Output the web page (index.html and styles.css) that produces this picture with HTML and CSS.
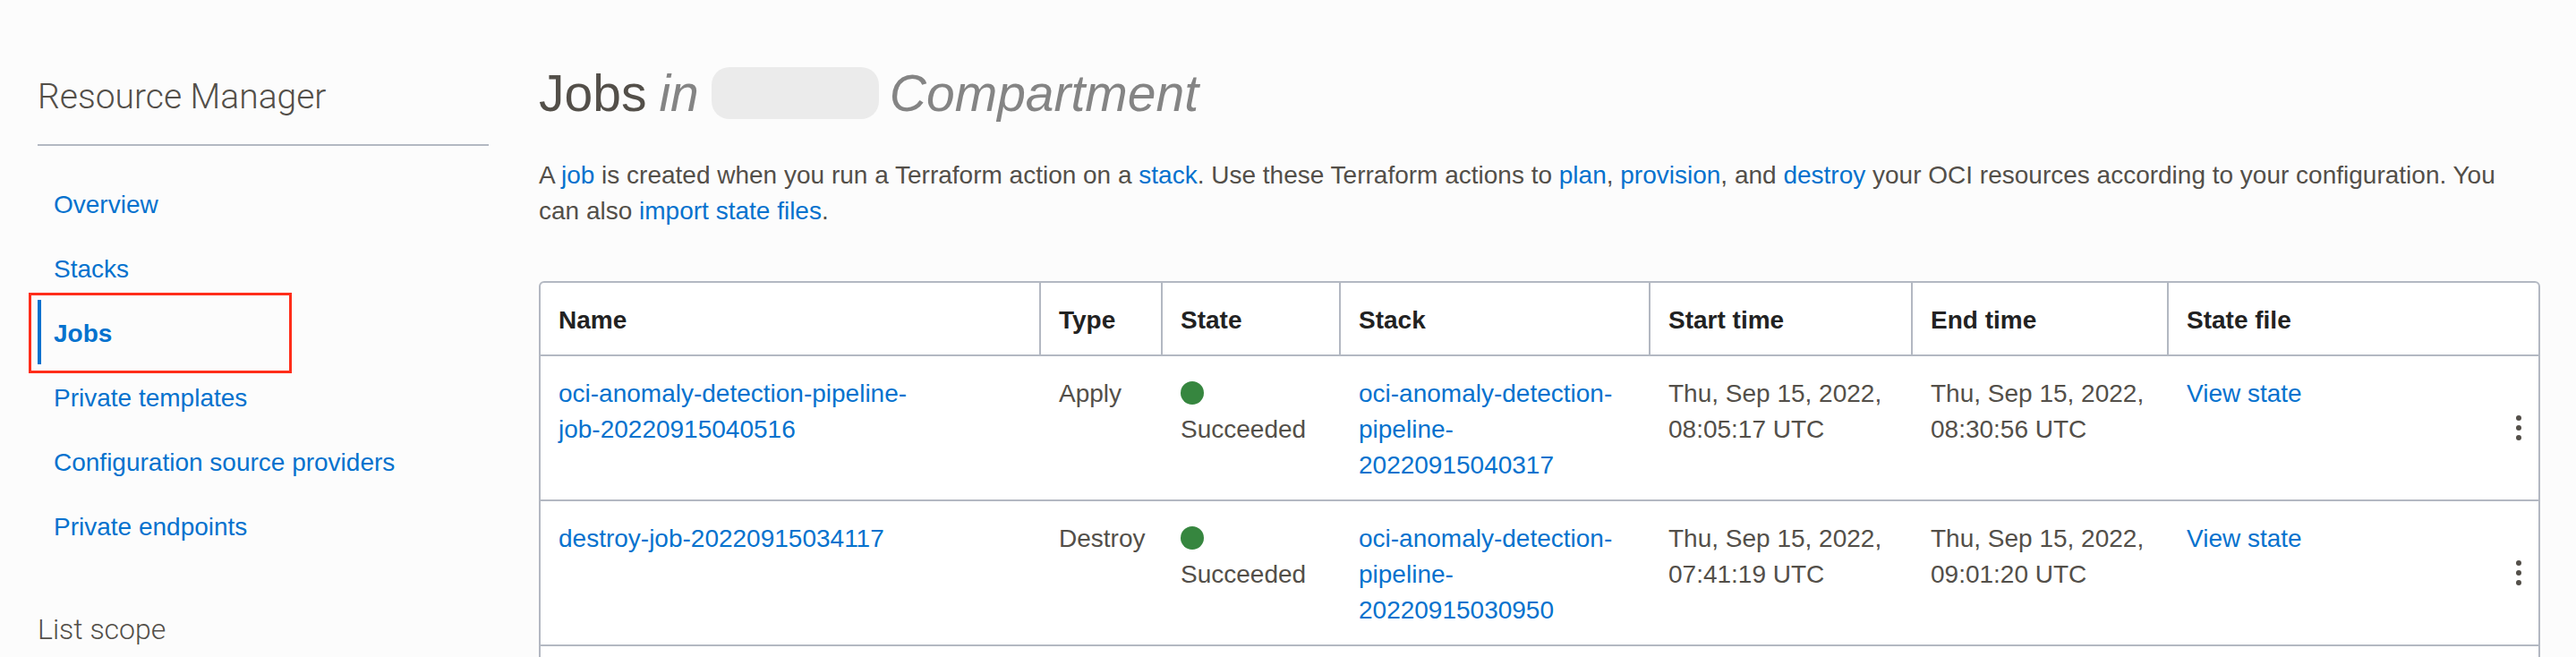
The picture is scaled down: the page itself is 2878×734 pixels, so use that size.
FILE: index.html
```html
<!DOCTYPE html>
<html lang="en">
<head>
<meta charset="utf-8">
<title>Jobs - Resource Manager</title>
<link rel="stylesheet" href="styles.css">
</head>
<body>
<div class="shell">
  <aside class="sidebar">
    <h2 class="sidebar-title">Resource Manager</h2>
    <nav class="nav" aria-label="Resource Manager">
      <a class="nav-item" href="#">Overview</a>
      <a class="nav-item" href="#">Stacks</a>
      <a class="nav-item active" href="#" aria-current="page">Jobs<span class="highlight"></span></a>
      <a class="nav-item" href="#">Private templates</a>
      <a class="nav-item" href="#">Configuration source providers</a>
      <a class="nav-item" href="#">Private endpoints</a>
    </nav>
    <h3 class="scope-title">List scope</h3>
  </aside>
  <main class="main">
    <h1 class="title"><span>Jobs</span><em>in</em><span class="redacted"></span><em>Compartment</em></h1>
    <p class="intro">A <a href="#">job</a> is created when you run a Terraform action on a <a href="#">stack</a>. Use these Terraform actions to <a href="#">plan</a>, <a href="#">provision</a>, and <a href="#">destroy</a> your OCI resources according to your configuration. You can also <a href="#">import state files</a>.</p>
    <div class="table-frame">
      <table class="jobs">
        <colgroup>
          <col class="col-name"><col class="col-type"><col class="col-state"><col class="col-stack"><col class="col-start"><col class="col-end"><col><col class="col-menu">
        </colgroup>
        <thead>
          <tr><th>Name</th><th>Type</th><th>State</th><th>Stack</th><th>Start time</th><th>End time</th><th colspan="2">State file</th></tr>
        </thead>
        <tbody>
          <tr>
            <td><a href="#">oci-anomaly-detection-pipeline-<br>job-20220915040516</a></td>
            <td>Apply</td>
            <td><span class="dot"></span>Succeeded</td>
            <td><a href="#">oci-anomaly-detection-<br>pipeline-<br>20220915040317</a></td>
            <td>Thu, Sep 15, 2022,<br>08:05:17 UTC</td>
            <td>Thu, Sep 15, 2022,<br>08:30:56 UTC</td>
            <td><a href="#">View state</a></td>
            <td class="menu-cell"><button class="menu" type="button" aria-label="Actions"><svg width="6" height="28" viewBox="0 0 6 28"><circle cx="3" cy="3" r="3"/><circle cx="3" cy="14" r="3"/><circle cx="3" cy="25" r="3"/></svg></button></td>
          </tr>
          <tr>
            <td><a href="#">destroy-job-20220915034117</a></td>
            <td>Destroy</td>
            <td><span class="dot"></span>Succeeded</td>
            <td><a href="#">oci-anomaly-detection-<br>pipeline-<br>20220915030950</a></td>
            <td>Thu, Sep 15, 2022,<br>07:41:19 UTC</td>
            <td>Thu, Sep 15, 2022,<br>09:01:20 UTC</td>
            <td><a href="#">View state</a></td>
            <td class="menu-cell"><button class="menu" type="button" aria-label="Actions"><svg width="6" height="28" viewBox="0 0 6 28"><circle cx="3" cy="3" r="3"/><circle cx="3" cy="14" r="3"/><circle cx="3" cy="25" r="3"/></svg></button></td>
          </tr>
          <tr><td colspan="8"></td></tr>
        </tbody>
      </table>
    </div>
  </main>
</div>
</body>
</html>
```
FILE: styles.css
```css
* { box-sizing: border-box; }

body {
  margin: 0;
  background: #fcfcfc;
  color: #534f49;
  font: 28px/40px "Liberation Sans", Arial, sans-serif;
}

a { color: #0572ce; text-decoration: none; }

.shell {
  display: flex;
  gap: 56px;
  height: 100vh;
  padding: 0 40px 0 42px;
  overflow: hidden;
}

/* Sidebar */
.sidebar { flex: 0 0 504px; padding-top: 80px; }

.sidebar-title {
  margin: 0 0 28px;
  padding-bottom: 25px;
  border-bottom: 2px solid #b3b8c2;
  font: 300 39px/56px Roboto, sans-serif;
}

.nav { display: flex; flex-direction: column; }

.nav-item {
  position: relative;
  padding: 18px 0 14px 14px;
  border-left: 4px solid transparent;
}

.nav-item.active { border-left-color: #0572ce; font-weight: bold; }

.highlight {
  position: absolute;
  top: -8px;
  left: -14px;
  width: 294px;
  height: 90px;
  border: 3px solid #ff2d1a;
}

.scope-title {
  margin: 58px 0 0;
  font: 300 32px/44px Roboto, sans-serif;
}

/* Main */
.main { flex: 1; min-width: 0; padding-top: 72px; }

.title {
  display: flex;
  align-items: center;
  gap: 14px;
  margin: 0 0 40px;
  font-size: 57px;
  font-weight: normal;
  line-height: 64px;
}

.title em { color: #848484; }

.redacted {
  width: 187px;
  height: 58px;
  margin-right: -2px;
  border-radius: 20px;
  background: #ebebeb;
}

.intro { margin: 0 0 58px; }

.table-frame {
  border: 2px solid #b3b8c2;
  border-radius: 6px;
  background: #fff;
  overflow: hidden;
}

.jobs {
  width: 100%;
  table-layout: fixed;
  border-collapse: separate;
  border-spacing: 0;
}

.col-name { width: 559px; }
.col-type { width: 136px; }
.col-state { width: 199px; }
.col-stack { width: 346px; }
.col-start { width: 293px; }
.col-end { width: 286px; }
.col-menu { width: 44px; }

.jobs th, .jobs td {
  height: 162px;
  padding: 22px 0 18px 20px;
  border-bottom: 2px solid #b3b8c2;
  text-align: left;
  vertical-align: top;
  white-space: nowrap;
}

.jobs th {
  height: 82px;
  border-right: 2px solid #b3b8c2;
  color: #222;
}

.jobs th:last-child { border-right: 0; }

.dot {
  display: block;
  width: 26px;
  height: 26px;
  margin: 6px 0 8px;
  border-radius: 50%;
  background: #36863f;
}

.jobs .menu-cell { padding: 0; vertical-align: middle; }

.menu {
  display: flex;
  justify-content: center;
  width: 44px;
  padding: 6px 0;
  border: 0;
  background: none;
  cursor: pointer;
}

.menu svg { fill: #534f49; }
```
